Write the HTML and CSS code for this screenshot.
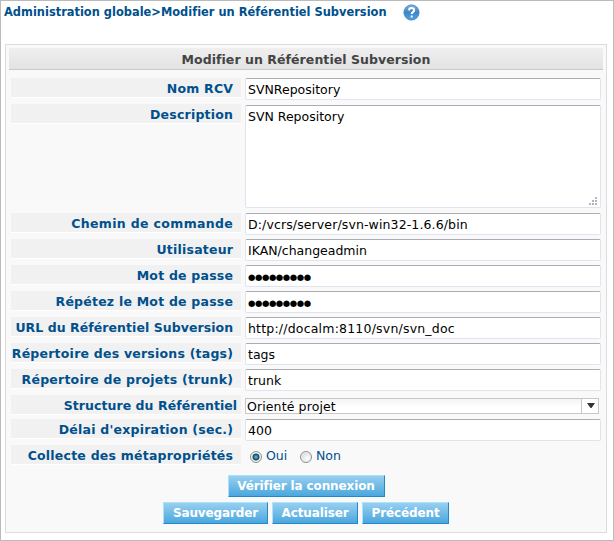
FILE: index.html
```html
<!DOCTYPE html>
<html lang="fr">
<head>
<meta charset="utf-8">
<title>Modifier un Référentiel Subversion</title>
<link rel="stylesheet" href="styles.css">
</head>
<body>
<header class="breadcrumb">
  <span class="crumbs">Administration globale&gt;Modifier un Référentiel Subversion</span>
  <svg class="help" width="17" height="17" viewBox="0 0 17 17">
    <defs><linearGradient id="ball" x1="0" y1="0" x2="0" y2="1"><stop offset="0" stop-color="#7fb2de"/><stop offset=".5" stop-color="#3d86c8"/><stop offset="1" stop-color="#4ba3e6"/></linearGradient></defs>
    <circle cx="8.5" cy="8.5" r="7.6" fill="url(#ball)" stroke="#4a82b8" stroke-width=".9"/>
    <path d="M6 6.4C6.1 4.7 7.1 4 8.5 4c1.500 0 2.600.8 2.600 2.200 0 1.900-2.400 1.900-2.400 3.800M8.700 11.500v1.900" fill="none" stroke="#fff" stroke-width="2"/>
  </svg>
</header>
<main class="panel">
  <h1 class="title"><span>Modifier un Référentiel Subversion</span></h1>
  <form class="form">
    <div class="row"><label>Nom RCV</label><div class="field">SVNRepository</div></div>
    <div class="row tall"><label>Description</label><div class="field area">SVN Repository
      <svg class="grip" width="9" height="9" viewBox="0 0 9 9"><path d="M6 0h2v2H6zM3 3h2v2H3zM6 3h2v2H6zM0 6h2v2H0zM3 6h2v2H3zM6 6h2v2H6z" fill="#b4b4b4"/></svg></div></div>
    <div class="row"><label class="wide">Chemin de commande</label><div class="field path">D:/vcrs/server/svn-win32-1.6.6/bin</div></div>
    <div class="row"><label>Utilisateur</label><div class="field">IKAN/changeadmin</div></div>
    <div class="row"><label>Mot de passe</label><div class="field secret">●●●●●●●●●</div></div>
    <div class="row"><label>Répétez le Mot de passe</label><div class="field secret">●●●●●●●●●</div></div>
    <div class="row"><label class="tight">URL du Référentiel Subversion</label><div class="field url">http://docalm:8110/svn/svn_doc</div></div>
    <div class="row"><label>Répertoire des versions (tags)</label><div class="field">tags</div></div>
    <div class="row"><label>Répertoire de projets (trunk)</label><div class="field">trunk</div></div>
    <div class="row short"><label class="tight flush">Structure du Référentiel</label>
      <div class="select"><span class="value">Orienté projet</span><span class="arrow"><svg width="8" height="5" viewBox="0 0 8 5"><path d="M0 0h8L4.500 5h-1z" fill="#333"/></svg></span></div></div>
    <div class="row"><label>Délai d'expiration (sec.)</label><div class="field">400</div></div>
    <div class="row"><label>Collecte des métapropriétés</label>
      <div class="choices"><span class="radio on"></span><span class="choice">Oui</span><span class="radio"></span><span class="choice">Non</span></div></div>
  </form>
  <div class="actions"><button class="verify">Vérifier la connexion</button></div>
  <div class="actions second"><button class="save">Sauvegarder</button><button class="refresh">Actualiser</button><button class="back">Précédent</button></div>
</main>
</body>
</html>
```
FILE: styles.css
```css
* { box-sizing: border-box; }
body {
  margin: 0;
  width: 614px;
  height: 541px;
  border: 1px solid #bbb;
  background: #fff;
  font-family: "DejaVu Sans", sans-serif;
  font-size: 12.5px;
  color: #000;
  overflow: hidden;
}
.breadcrumb {
  display: flex;
  height: 43px;
  padding-left: 3px;
  color: #00508c;
  font-size: 11.4px;
  font-weight: bold;
  letter-spacing: .02px;
  white-space: nowrap;
}
.crumbs { line-height: 23px; width: 399px; }
.help { margin-top: 3px; }
.panel {
  width: 602px;
  height: 489px;
  margin-left: 4px;
  padding: 3px;
  border: 1px solid #dcdcdc;
  background: #f9f9f9;
}
.title {
  margin: 0 0 8px;
  height: 22px;
  border-bottom: 1px solid #c8c8c8;
  background: linear-gradient(#efefef, #e3e3e3);
  color: #444;
  font-size: 12.5px;
  letter-spacing: .06px;
  line-height: 23px;
  text-align: center;
}
.form { display: flex; flex-direction: column; gap: 4px; padding-left: 2px; }
.row {
  display: grid;
  grid-template-columns: 230px 356px;
  column-gap: 4px;
  align-items: start;
  height: 22px;
}
.row.tall { height: 105px; }
.row.short { height: 20px; }
label {
  height: 20px;
  padding-right: 7.8px;
  border-bottom: 1px solid #fff;
  background: #f1f1f1;
  color: #00508c;
  font-size: 12.5px;
  font-weight: bold;
  letter-spacing: .22px;
  line-height: 21px;
  text-align: right;
  white-space: nowrap;
}
label.wide { letter-spacing: .35px; }
label.tight { letter-spacing: .06px; }
label.flush { padding-right: 3.8px; }
.field {
  height: 22px;
  padding-left: 2px;
  border: 1px solid #dfe5ee;
  border-top-color: #abadb3;
  border-radius: 2px;
  background: #fff;
  line-height: 22px;
  white-space: nowrap;
}
.path { letter-spacing: .12px; }
.url { letter-spacing: .2px; }
.area { position: relative; height: 103px; margin-top: 1px; }
.grip { position: absolute; right: 2px; bottom: 1px; }
.secret { font-size: 8.5px; letter-spacing: -.45px; }
.select {
  display: flex;
  width: 354px;
  height: 16px;
  margin-top: 3px;
  border: 1px solid #c8c8c8;
  background: linear-gradient(#f4f4f4, #fff 60%);
}
.value { flex: 1; padding-left: 1px; letter-spacing: .12px; line-height: 15px; }
.arrow {
  display: flex;
  width: 17px;
  padding: 4px 0 0 5px;
  border-left: 1px solid #c8c8c8;
  background: #fff;
}
.choices { display: flex; align-items: center; padding-left: 5px; color: #00508c; }
.radio {
  width: 12px;
  height: 12px;
  margin-top: 3px;
  border: 1px solid #8e8f8f;
  border-radius: 50%;
  background: radial-gradient(circle at 65% 65%, #fff, #c9cdd1);
  box-shadow: inset 0 0 0 1px #f4f4f4;
}
.radio.on { background: radial-gradient(circle, #5fc4e8 0, #14485f 3px, #e4e8ea 4px); }
.choice { width: 38px; padding-left: 4px; line-height: 21px; }
.actions { display: flex; justify-content: center; gap: 4px; margin-top: 8px; }
.second { margin-top: 5px; }
button {
  height: 22px;
  padding: 0;
  border: 1px solid;
  border-color: #a9e4fa #2288c8 #2288c8 #a9e4fa;
  background: linear-gradient(#98cff0, #4aa7dd);
  color: #fff;
  font: bold 12px/20px "DejaVu Sans", sans-serif;
  letter-spacing: -.12px;
  white-space: nowrap;
}
.verify { width: 157px; }
.save { width: 105px; }
.refresh { width: 86px; }
.back { width: 87px; }
```
